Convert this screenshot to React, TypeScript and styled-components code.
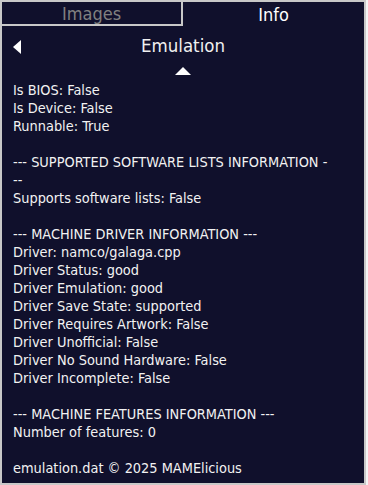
import React from 'react';
import styled, { createGlobalStyle } from 'styled-components';

const GlobalStyle = createGlobalStyle`
  html, body {
    margin: 0;
    padding: 0;
    background: #f4f4f4;
  }
  body {
    font-family: "DejaVu Sans Condensed", "DejaVu Sans", sans-serif;
  }
`;

// outer frame of the info panel
const Frame = styled.div`
  box-sizing: border-box;
  width: 366px;
  height: 485px;
  border: 2px solid #c8c8c8;
  background: #10102c;
  display: flex;
  flex-direction: column;
  color: #f2f2f2;
`;

const TabBar = styled.div`
  display: grid;
  grid-template-columns: 181px 1fr;
  height: 24px;
`;

const Tab = styled.div<{ $active?: boolean }>`
  display: flex;
  align-items: center;
  justify-content: center;
  font-size: 18px;
  color: ${(p) => (p.$active ? '#ffffff' : '#808080')};
  border-right: ${(p) => (p.$active ? 'none' : '2px solid #c8c8c8')};
  border-bottom: ${(p) => (p.$active ? 'none' : '2px solid #c8c8c8')};
`;

const Header = styled.div`
  position: relative;
  display: flex;
  align-items: center;
  justify-content: center;
  height: 39px;
`;

const Title = styled.div`
  font-size: 18.5px;
  color: #f0f0f0;
`;

const BackArrow = styled.div`
  position: absolute;
  left: 11px;
  top: 14px;
  width: 0;
  height: 0;
  border-top: 7px solid transparent;
  border-bottom: 7px solid transparent;
  border-right: 8px solid #ffffff;
`;

const ScrollUp = styled.div`
  align-self: center;
  width: 0;
  height: 0;
  margin: 2px 0 6px 0;
  border-left: 8px solid transparent;
  border-right: 8px solid transparent;
  border-bottom: 8px solid #ffffff;
`;

const Body = styled.div`
  padding: 0 8px 0 11px;
  font-size: 14.4px;
  line-height: 18px;
`;

const Line = styled.div`
  min-height: 18px;
  white-space: pre;
`;

const lines = [
  'Is BIOS: False',
  'Is Device: False',
  'Runnable: True',
  '',
  '--- SUPPORTED SOFTWARE LISTS INFORMATION -',
  '--',
  'Supports software lists: False',
  '',
  '--- MACHINE DRIVER INFORMATION ---',
  'Driver: namco/galaga.cpp',
  'Driver Status: good',
  'Driver Emulation: good',
  'Driver Save State: supported',
  'Driver Requires Artwork: False',
  'Driver Unofficial: False',
  'Driver No Sound Hardware: False',
  'Driver Incomplete: False',
  '',
  '--- MACHINE FEATURES INFORMATION ---',
  'Number of features: 0',
  '',
  'emulation.dat \u00a9 2025 MAMElicious',
];

const App = () => {
  return (
    <>
      <GlobalStyle />
      <Frame>
        <TabBar>
          <Tab>Images</Tab>
          <Tab $active>Info</Tab>
        </TabBar>
        <Header>
          <BackArrow />
          <Title>Emulation</Title>
        </Header>
        <ScrollUp />
        <Body>
          {lines.map((l, i) => (
            <Line key={i}>{l}</Line>
          ))}
        </Body>
      </Frame>
    </>
  );
};

export default App;
